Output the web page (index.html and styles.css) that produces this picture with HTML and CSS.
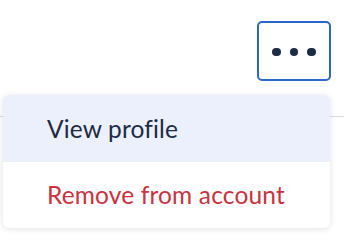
FILE: index.html
```html
<!DOCTYPE html>
<html>
<head>
<meta charset="utf-8">
<link rel="stylesheet" href="styles.css">
</head>
<body>
<div class="page">
  <div class="toolbar">
    <button class="more-btn" aria-label="More actions">
      <span class="dot"></span><span class="dot"></span><span class="dot"></span>
    </button>
  </div>
  <ul class="menu">
    <li class="menu-item active">View profile</li>
    <li class="menu-item danger">Remove from account</li>
  </ul>
</div>
</body>
</html>
```
FILE: styles.css
```css
html, body {
  margin: 0;
  padding: 0;
  background: #ffffff;
}
.page {
  position: relative;
  width: 344px;
  height: 242px;
  overflow: hidden;
  font-family: Lato, "Open Sans", sans-serif;
}
.toolbar {
  box-sizing: border-box;
  height: 117px;
  border-bottom: 1px solid #dcdcdc;
  display: flex;
  justify-content: flex-end;
  align-items: flex-start;
  padding: 21px 13px 0 0;
}
.more-btn {
  box-sizing: border-box;
  width: 74px;
  height: 60px;
  border: 2px solid #2c68cc;
  border-radius: 5px;
  background: #ffffff;
  display: flex;
  align-items: center;
  justify-content: center;
  gap: 9px;
  padding: 0;
  padding-top: 2px;
}
.dot {
  width: 8.5px;
  height: 8.5px;
  border-radius: 50%;
  background: #1d2b45;
}
.menu {
  position: absolute;
  top: 95px;
  left: 3px;
  width: 327px;
  margin: 0;
  padding: 0;
  list-style: none;
  background: #ffffff;
  border-radius: 6px;
  box-shadow: 0 1px 6px rgba(0, 0, 0, 0.12);
  overflow: hidden;
}
.menu-item {
  box-sizing: border-box;
  height: 66.5px;
  display: flex;
  align-items: center;
  padding-left: 44px;
  font-size: 24.5px;
  letter-spacing: 0.15px;
  color: #1d2b45;
}
.menu-item.active {
  background: #ebf0fc;
}
.menu-item.danger {
  color: #c9323f;
}
```
